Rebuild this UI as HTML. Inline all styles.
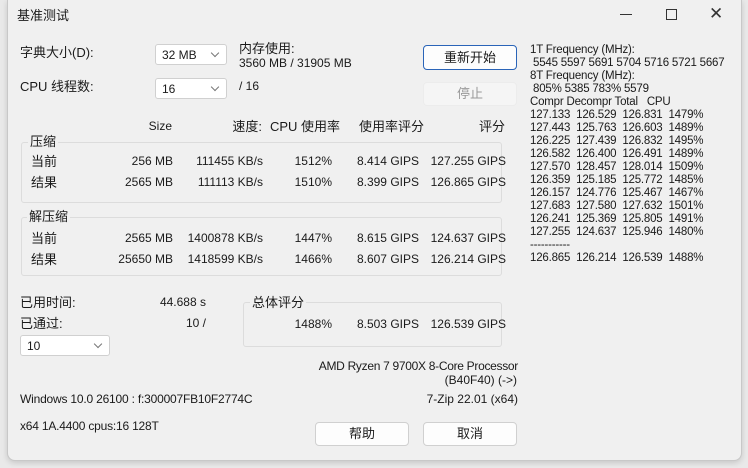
<!DOCTYPE html><html><head><meta charset="utf-8"><style>
body{margin:0;width:748px;height:468px;background:#e9e9e9;font-family:"Liberation Sans","Noto Sans CJK SC",sans-serif;font-size:12px;color:#1a1a1a;position:relative;overflow:hidden}
#w{position:absolute;left:7px;top:0;width:733px;height:460px;background:#f0f0f0;border:1px solid #c8c8c8;border-top:none;border-radius:0 0 8px 8px;box-shadow:0 2px 6px rgba(0,0,0,.15)}
.a{position:absolute;white-space:nowrap;line-height:15px}
.r{text-align:right}
.c{font-size:13px;line-height:15px}
.box{position:absolute;border:1px solid #dcdcdc;border-radius:3px}
.lg{position:absolute;background:#f0f0f0;padding:0 2px;font-size:13px;line-height:15px}
.sel{position:absolute;background:#fff;border:1px solid #d0d0d0;border-radius:3px;height:21px;box-sizing:border-box;padding:3px 6px;font-size:12px;line-height:14px}
.sel:after{content:"";position:absolute;right:8px;top:5px;width:5px;height:5px;border-right:1px solid #777;border-bottom:1px solid #777;transform:rotate(45deg)}
.btn{position:absolute;background:#fdfdfd;border:1px solid #d0d0d0;border-radius:4px;box-sizing:border-box;text-align:center;font-size:13px;line-height:22px}
#mono{position:absolute;left:530px;top:44px;line-height:13px;font-size:11.5px;white-space:pre;letter-spacing:-0.2px}
</style></head><body>
<div id="w"></div>
<div class="a c" style="left:17px;top:8px">基准测试</div>
<div class="a" style="left:620px;top:14px;width:12px;height:1px;background:#333"></div>
<div class="a" style="left:666px;top:9px;width:9px;height:9px;border:1px solid #333"></div>
<div class="a" style="left:709px;top:6px;font-size:17px;color:#333">✕</div>

<div class="a c" style="left:20px;top:45px">字典大小(D):</div>
<div class="sel" style="left:155px;top:44px;width:72px">32 MB</div>
<div class="a c" style="left:239px;top:41px">内存使用:</div>
<div class="a" style="left:239px;top:56px">3560 MB / 31905 MB</div>
<div class="a c" style="left:20px;top:79px">CPU 线程数:</div>
<div class="sel" style="left:155px;top:78px;width:72px">16</div>
<div class="a" style="left:239px;top:79px">/ 16</div>
<div class="btn" style="left:423px;top:45px;width:94px;height:25px;border:1px solid #2a64b8;line-height:23px">重新开始</div>
<div class="btn" style="left:423px;top:82px;width:94px;height:24px;background:#f5f5f5;border-color:#ececec;color:#999">停止</div>

<div class="a r" style="left:120px;width:52px;top:119px">Size</div>
<div class="a r c" style="left:200px;width:62px;top:119px">速度:</div>
<div class="a c" style="left:270px;top:119px">CPU 使用率</div>
<div class="a c" style="left:359px;top:119px">使用率评分</div>
<div class="a r c" style="left:440px;width:65px;top:119px">评分</div>

<div class="box" style="left:21px;top:142px;width:479px;height:59px"></div>
<div class="lg" style="left:28px;top:134px">压缩</div>
<div class="box" style="left:21px;top:217px;width:479px;height:57px"></div>
<div class="lg" style="left:27px;top:209px">解压缩</div>

<div class="a c" style="left:31px;top:154px">当前</div>
<div class="a r" style="left:100px;width:73px;top:154px">256 MB</div>
<div class="a r" style="left:180px;width:83px;top:154px">111455 KB/s</div>
<div class="a r" style="left:270px;width:62px;top:154px">1512%</div>
<div class="a r" style="left:340px;width:79px;top:154px">8.414 GIPS</div>
<div class="a r" style="left:420px;width:86px;top:154px">127.255 GIPS</div>
<div class="a c" style="left:31px;top:175px">结果</div>
<div class="a r" style="left:100px;width:73px;top:175px">2565 MB</div>
<div class="a r" style="left:180px;width:83px;top:175px">111113 KB/s</div>
<div class="a r" style="left:270px;width:62px;top:175px">1510%</div>
<div class="a r" style="left:340px;width:79px;top:175px">8.399 GIPS</div>
<div class="a r" style="left:420px;width:86px;top:175px">126.865 GIPS</div>

<div class="a c" style="left:31px;top:231px">当前</div>
<div class="a r" style="left:100px;width:73px;top:231px">2565 MB</div>
<div class="a r" style="left:180px;width:83px;top:231px">1400878 KB/s</div>
<div class="a r" style="left:270px;width:62px;top:231px">1447%</div>
<div class="a r" style="left:340px;width:79px;top:231px">8.615 GIPS</div>
<div class="a r" style="left:420px;width:86px;top:231px">124.637 GIPS</div>
<div class="a c" style="left:31px;top:252px">结果</div>
<div class="a r" style="left:100px;width:73px;top:252px">25650 MB</div>
<div class="a r" style="left:180px;width:83px;top:252px">1418599 KB/s</div>
<div class="a r" style="left:270px;width:62px;top:252px">1466%</div>
<div class="a r" style="left:340px;width:79px;top:252px">8.607 GIPS</div>
<div class="a r" style="left:420px;width:86px;top:252px">126.214 GIPS</div>

<div class="a c" style="left:20px;top:295px">已用时间:</div>
<div class="a r" style="left:120px;width:86px;top:295px">44.688 s</div>
<div class="a c" style="left:20px;top:316px">已通过:</div>
<div class="a r" style="left:120px;width:86px;top:316px">10 /</div>
<div class="sel" style="left:20px;top:335px;width:90px">10</div>

<div class="box" style="left:243px;top:302px;width:257px;height:43px"></div>
<div class="lg" style="left:250px;top:295px">总体评分</div>
<div class="a r" style="left:270px;width:62px;top:317px">1488%</div>
<div class="a r" style="left:340px;width:79px;top:317px">8.503 GIPS</div>
<div class="a r" style="left:420px;width:86px;top:317px">126.539 GIPS</div>

<div class="a r" style="left:300px;width:218px;top:359px;letter-spacing:-0.3px">AMD Ryzen 7 9700X 8-Core Processor</div>
<div class="a r" style="left:300px;width:217px;top:373px">(B40F40) (-&gt;)</div>
<div class="a" style="left:20px;top:392px;letter-spacing:-0.2px">Windows 10.0 26100 : f:300007FB10F2774C</div>
<div class="a r" style="left:300px;width:218px;top:392px">7-Zip 22.01 (x64)</div>
<div class="a" style="left:20px;top:419px;letter-spacing:-0.2px">x64 1A.4400 cpus:16 128T</div>
<div class="btn" style="left:315px;top:422px;width:94px;height:24px">帮助</div>
<div class="btn" style="left:423px;top:422px;width:94px;height:24px">取消</div>

<div id="mono">1T Frequency (MHz):
 5545 5597 5691 5704 5716 5721 5667
8T Frequency (MHz):
 805% 5385 783% 5579
Compr Decompr Total   CPU
127.133  126.529  126.831  1479%
127.443  125.763  126.603  1489%
126.225  127.439  126.832  1495%
126.582  126.400  126.491  1489%
127.570  128.457  128.014  1509%
126.359  125.185  125.772  1485%
126.157  124.776  125.467  1467%
127.683  127.580  127.632  1501%
126.241  125.369  125.805  1491%
127.255  124.637  125.946  1480%
-----------
126.865  126.214  126.539  1488%</div>
</body></html>
